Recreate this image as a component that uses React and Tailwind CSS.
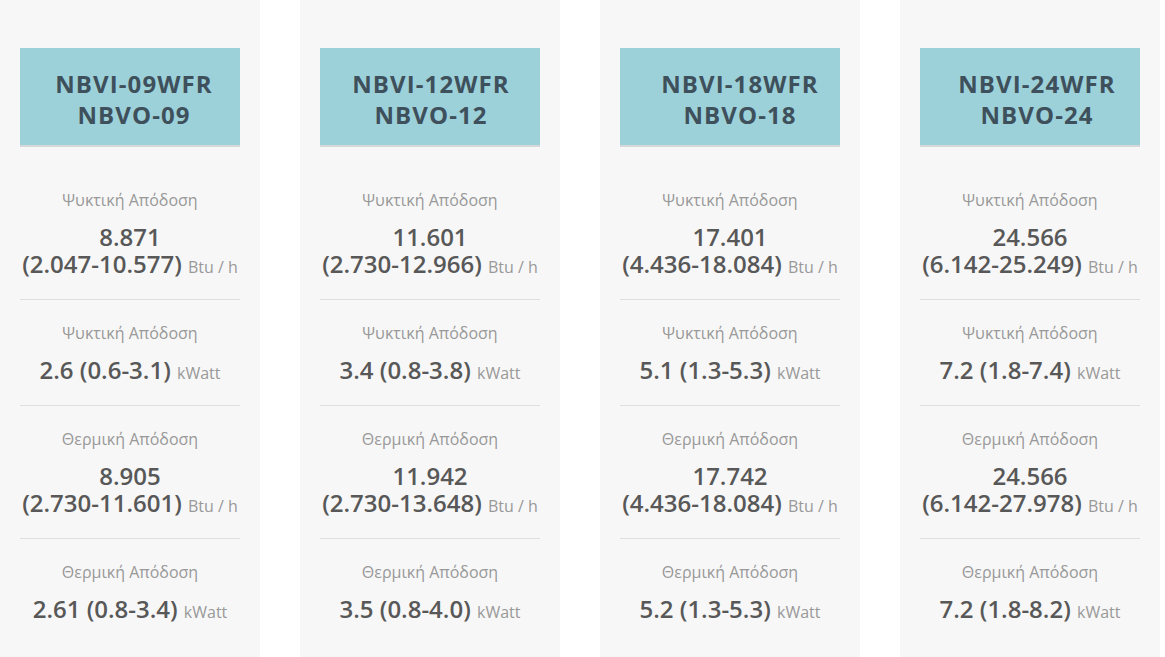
import React from "react";

const cols = [
  {
    t1: "NBVI-09WFR", t2: "NBVO-09", off: "pl-[8px]",
    rows: [
      { label: "Ψυκτική Απόδοση", a: "8.871", b: "(2.047-10.577)", unit: "Btu / h" },
      { label: "Ψυκτική Απόδοση", b: "2.6 (0.6-3.1)", unit: "kWatt" },
      { label: "Θερμική Απόδοση", a: "8.905", b: "(2.730-11.601)", unit: "Btu / h" },
      { label: "Θερμική Απόδοση", b: "2.61 (0.8-3.4)", unit: "kWatt" },
    ],
  },
  {
    t1: "NBVI-12WFR", t2: "NBVO-12", off: "pl-[2px]",
    rows: [
      { label: "Ψυκτική Απόδοση", a: "11.601", b: "(2.730-12.966)", unit: "Btu / h" },
      { label: "Ψυκτική Απόδοση", b: "3.4 (0.8-3.8)", unit: "kWatt" },
      { label: "Θερμική Απόδοση", a: "11.942", b: "(2.730-13.648)", unit: "Btu / h" },
      { label: "Θερμική Απόδοση", b: "3.5 (0.8-4.0)", unit: "kWatt" },
    ],
  },
  {
    t1: "NBVI-18WFR", t2: "NBVO-18", off: "pl-[20px]",
    rows: [
      { label: "Ψυκτική Απόδοση", a: "17.401", b: "(4.436-18.084)", unit: "Btu / h" },
      { label: "Ψυκτική Απόδοση", b: "5.1 (1.3-5.3)", unit: "kWatt" },
      { label: "Θερμική Απόδοση", a: "17.742", b: "(4.436-18.084)", unit: "Btu / h" },
      { label: "Θερμική Απόδοση", b: "5.2 (1.3-5.3)", unit: "kWatt" },
    ],
  },
  {
    t1: "NBVI-24WFR", t2: "NBVO-24", off: "pl-[14px]",
    rows: [
      { label: "Ψυκτική Απόδοση", a: "24.566", b: "(6.142-25.249)", unit: "Btu / h" },
      { label: "Ψυκτική Απόδοση", b: "7.2 (1.8-7.4)", unit: "kWatt" },
      { label: "Θερμική Απόδοση", a: "24.566", b: "(6.142-27.978)", unit: "Btu / h" },
      { label: "Θερμική Απόδοση", b: "7.2 (1.8-8.2)", unit: "kWatt" },
    ],
  },
];

function Column({ c }) {
  return (
    <div className="w-[260px] shrink-0 bg-[#f7f7f7] px-[20px] pt-[48px] h-[657px]">
      <div className={`h-[99px] bg-[#9dd1da] border-b-2 border-[#d6d9da] pt-[20px] text-center text-[24px] leading-[31px] font-bold tracking-[1.1px] text-[#3e505b] ${c.off}`}>
        <div>{c.t1}</div>
        <div>{c.t2}</div>
      </div>
      <div className="mt-[20px]">
        {c.rows.map((r, i) => (
          <div
            key={i}
            className={`text-center pt-[22px] pb-[22px] ${i < 3 ? "border-b border-[#dfdfdf]" : ""}`}
          >
            <div className="text-[16px] leading-[22px] text-[#999]">{r.label}</div>
            <div className="mt-[12px] text-[24px] leading-[27px] font-semibold text-[#585858]">
              {r.a && <div className="h-[27px]">{r.a}</div>}
              <div className="h-[27px]">
                {r.b}{" "}
                <span className="text-[16px] leading-none font-normal text-[#999]">{r.unit}</span>
              </div>
            </div>
          </div>
        ))}
      </div>
    </div>
  );
}

export default function App() {
  return (
    <div
      className="w-[1165px] h-[657px] overflow-hidden bg-white flex gap-[40px]"
      style={{ fontFamily: '"Open Sans", "Noto Sans", sans-serif' }}
    >
      {cols.map((c, i) => (
        <Column key={i} c={c} />
      ))}
    </div>
  );
}
